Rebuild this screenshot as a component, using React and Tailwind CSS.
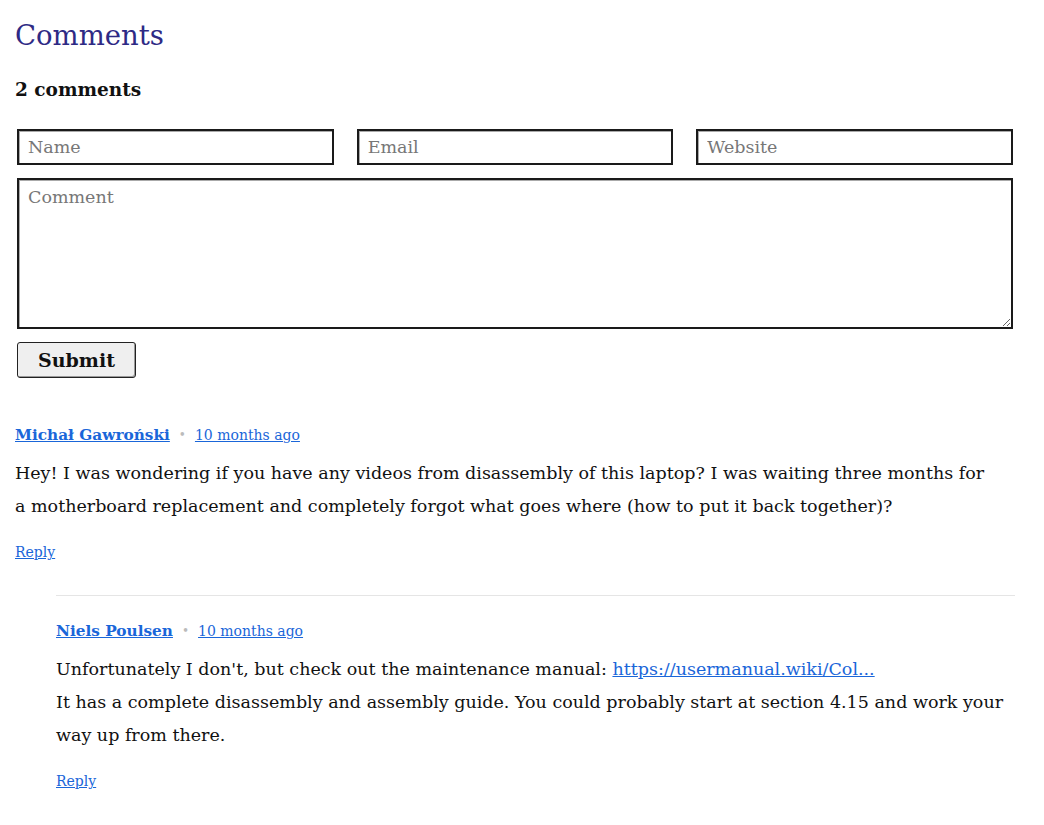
import React from 'react';

const serif = "font-['DejaVu_Serif','Liberation_Serif',serif]";

function Meta({ name }) {
  return (
    <div className="flex items-center leading-5">
      <a href="#" className="text-[15.3px] font-bold text-[#1a66d9] underline">{name}</a>
      <span className="mx-[9px] text-[#bbb] text-[12px]">•</span>
      <a href="#" className="text-[14px] text-[#1a66d9] underline">10 months ago</a>
    </div>
  );
}

export default function App() {
  return (
    <div className={`${serif} bg-white text-[#111] w-[1030px] px-[15px] pt-[16px] pb-10`}>
      <h2 className="text-[27.5px] leading-[38px] text-[#2e2a85]">Comments</h2>
      <h3 className="mt-[24px] text-[18.5px] leading-6 font-bold">2 comments</h3>

      {/* Form */}
      <form className="mt-[27px] w-[1000px] px-[2px]" onSubmit={(e) => e.preventDefault()}>
        <div className="flex gap-[23px]">
          <input placeholder="Name" className="flex-1 h-[36px] border-2 border-[#1a1a1a] shadow-[inset_1px_1px_0_#aaa] px-[9px] text-[17.5px] placeholder-[#777] outline-none" />
          <input placeholder="Email" className="flex-1 h-[36px] border-2 border-[#1a1a1a] shadow-[inset_1px_1px_0_#aaa] px-[9px] text-[17.5px] placeholder-[#777] outline-none" />
          <input placeholder="Website" className="flex-1 h-[36px] border-2 border-[#1a1a1a] shadow-[inset_1px_1px_0_#aaa] px-[9px] text-[17.5px] placeholder-[#777] outline-none" />
        </div>
        <textarea placeholder="Comment" className="mt-[13px] block w-full h-[151px] border-2 border-[#1a1a1a] shadow-[inset_1px_1px_0_#aaa] px-[9px] py-[5px] text-[17.5px] leading-6 placeholder-[#777] outline-none resize-y" />
        <button type="submit" className="mt-[13px] w-[119px] h-[36px] border border-[#222] rounded-[3px] bg-[#efefef] text-[19px] font-bold shadow-[inset_-1px_-1px_0_#999]">
          Submit
        </button>
      </form>

      {/* Comments */}
      <div className="mt-[47px] w-[1000px]">
        <Meta name="Michał Gawroński" />
        <p className="mt-[12px] pr-[20px] text-[17.5px] leading-[33px]">
          Hey! I was wondering if you have any videos from disassembly of this laptop? I was waiting three months for a motherboard replacement and completely forgot what goes where (how to put it back together)?
        </p>
        <a href="#" className="inline-block mt-[19px] text-[14px] text-[#1a66d9] underline">Reply</a>

        <div className="ml-[41px] mt-[31px] border-t border-[#e5e5e5] pt-[25px]">
          <Meta name="Niels Poulsen" />
          <p className="mt-[12px] text-[17.5px] leading-[33px]">
            Unfortunately I don't, but check out the maintenance manual:{' '}
            <a href="#" className="text-[#1a66d9] underline">https://usermanual.wiki/Col...</a>
            <br />
            It has a complete disassembly and assembly guide. You could probably start at section 4.15 and work your way up from there.
          </p>
          <a href="#" className="inline-block mt-[19px] text-[14px] text-[#1a66d9] underline">Reply</a>
        </div>
      </div>
    </div>
  );
}
